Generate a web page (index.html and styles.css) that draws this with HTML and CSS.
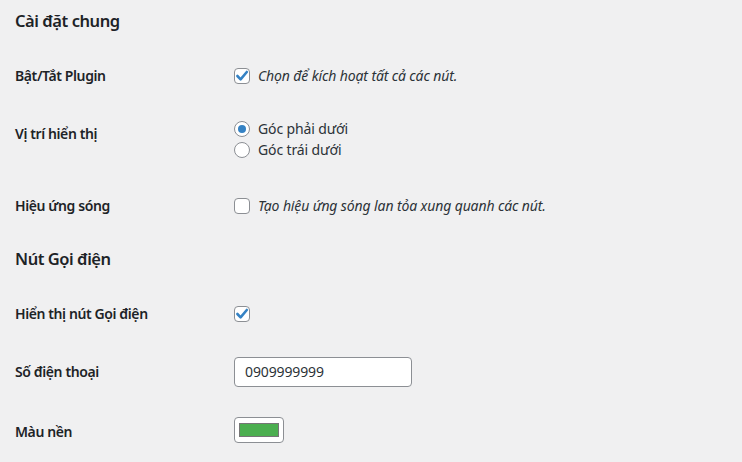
FILE: index.html
```html
<!DOCTYPE html>
<html lang="vi">
<head>
<meta charset="utf-8">
<title>Cài đặt</title>
<link rel="stylesheet" href="styles.css">
</head>
<body>
<div class="wrap">
  <h2 class="section-title">Cài đặt chung</h2>
  <div class="form-table">
    <div class="row">
      <div class="th">Bật/Tắt Plugin</div>
      <div class="td">
        <label class="line"><span class="cb checked"><svg viewBox="0 0 16 16" width="16" height="16"><path d="M3.4 8 L6.6 11.3 L12.8 4" fill="none" stroke="#3582c4" stroke-width="2.6" stroke-linecap="round" stroke-linejoin="round"/></svg></span><span class="desc">Chọn để kích hoạt tất cả các nút.</span></label>
      </div>
    </div>
    <div class="row">
      <div class="th">Vị trí hiển thị</div>
      <div class="td radios">
        <label class="line"><span class="radio checked"></span><span>Góc phải dưới</span></label>
        <label class="line"><span class="radio"></span><span>Góc trái dưới</span></label>
      </div>
    </div>
    <div class="row">
      <div class="th">Hiệu ứng sóng</div>
      <div class="td">
        <label class="line"><span class="cb"></span><span class="desc">Tạo hiệu ứng sóng lan tỏa xung quanh các nút.</span></label>
      </div>
    </div>
  </div>

  <h2 class="section-title">Nút Gọi điện</h2>
  <div class="form-table">
    <div class="row">
      <div class="th">Hiển thị nút Gọi điện</div>
      <div class="td">
        <label class="line"><span class="cb checked"><svg viewBox="0 0 16 16" width="16" height="16"><path d="M3.4 8 L6.6 11.3 L12.8 4" fill="none" stroke="#3582c4" stroke-width="2.6" stroke-linecap="round" stroke-linejoin="round"/></svg></span></label>
      </div>
    </div>
    <div class="row">
      <div class="th">Số điện thoại</div>
      <div class="td">
        <div class="text-input">0909999999</div>
      </div>
    </div>
    <div class="row">
      <div class="th">Màu nền</div>
      <div class="td">
        <div class="color-input"><span class="swatch"></span></div>
      </div>
    </div>
  </div>
</div>
</body>
</html>
```

FILE: styles.css
```css
html, body {
  margin: 0;
  padding: 0;
  background: #f0f0f1;
}
body {
  font-family: "Noto Sans", "Open Sans", sans-serif;
  font-size: 14px;
  color: #1d2327;
}
.wrap {
  padding: 10px 0 0 15px;
}
.section-title {
  margin: 0;
  font-size: 16.5px;
  line-height: 22px;
  font-weight: 600;
  letter-spacing: -0.45px;
  color: #1d2327;
}
.wrap .section-title + .form-table {
  margin-top: 14px;
}
.form-table + .section-title {
  margin-top: 14px;
}
.row {
  display: flex;
  align-items: flex-start;
}
.th {
  width: 210px;
  flex: none;
  padding: 21px 10px 19px 0;
  box-sizing: border-box;
  line-height: 18px;
  font-weight: 600;
  letter-spacing: -0.4px;
  color: #1d2327;
}
.td {
  padding: 15px 10px 15px 9px;
  color: #2c3338;
  letter-spacing: -0.12px;
}
.line {
  display: flex;
  align-items: center;
  height: 21px;
  gap: 8px;
}
.td:not(.radios) .line {
  margin-top: 4px;
}
.radios {
  padding-top: 14px;
  padding-bottom: 16px;
}
.cb {
  width: 16px;
  height: 16px;
  box-sizing: border-box;
  border: 1px solid #8c8f94;
  border-radius: 4px;
  background: #fff;
  flex: none;
  position: relative;
}
.cb svg {
  position: absolute;
  left: -1px;
  top: -1px;
}
.radio {
  width: 16px;
  height: 16px;
  box-sizing: border-box;
  border: 1px solid #8c8f94;
  border-radius: 50%;
  background: #fff;
  display: flex;
  align-items: center;
  justify-content: center;
  flex: none;
}
.radio.checked::before {
  content: "";
  width: 8px;
  height: 8px;
  border-radius: 50%;
  background: #3582c4;
}
.desc {
  font-style: italic;
}
.text-input {
  width: 178px;
  height: 30px;
  box-sizing: border-box;
  border: 1px solid #8c8f94;
  border-radius: 4px;
  background: #fff;
  padding: 0 10px;
  line-height: 28px;
  color: #2c3338;
}
.color-input {
  width: 50px;
  height: 26px;
  box-sizing: border-box;
  border: 1px solid #8c8f94;
  border-radius: 4px;
  background: #fff;
  display: flex;
  align-items: center;
  justify-content: center;
}
.swatch {
  width: 40px;
  height: 14px;
  box-sizing: border-box;
  border: 1px solid #767676;
  background: #4caf50;
}
```
